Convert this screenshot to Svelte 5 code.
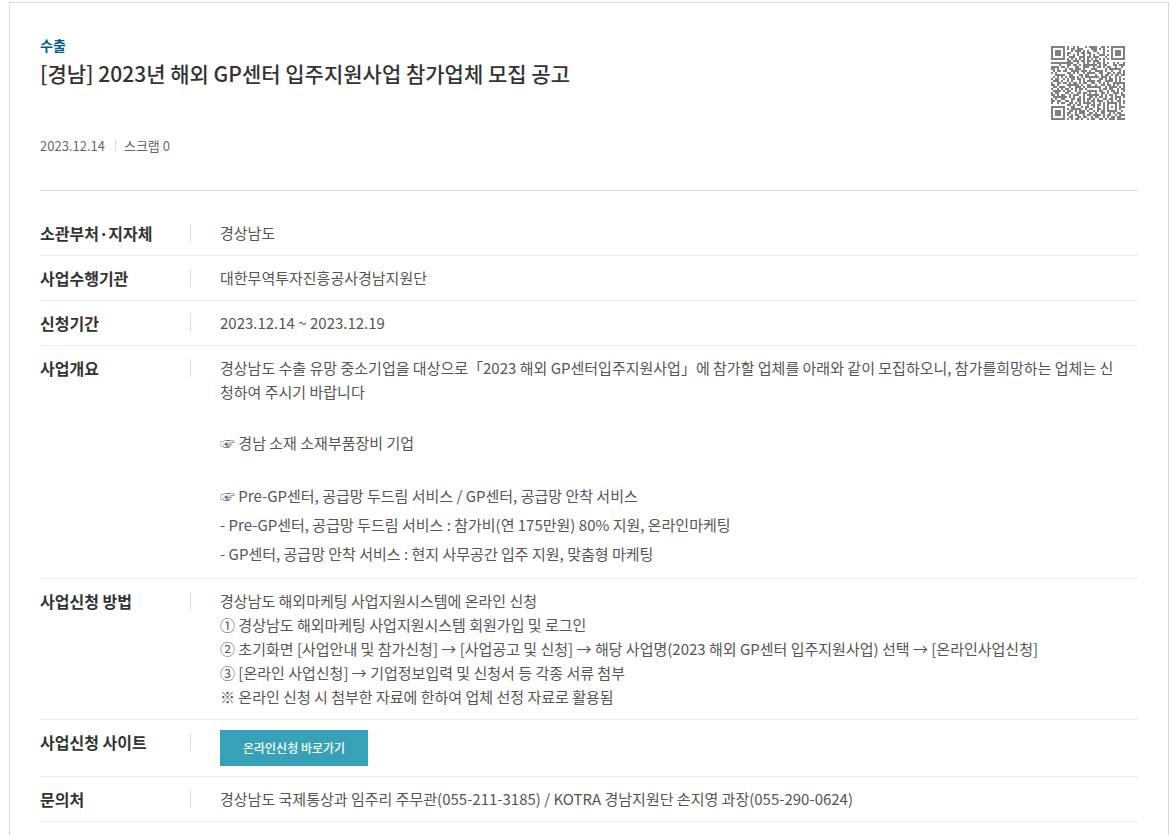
<script lang="ts">
	type Row = { label: string; lines?: string[]; notes?: string[][]; link?: string };

	const rows: Row[] = [
		{ label: '소관부처·지자체', lines: ['경상남도'] },
		{ label: '사업수행기관', lines: ['대한무역투자진흥공사경남지원단'] },
		{ label: '신청기간', lines: ['2023.12.14 ~ 2023.12.19'] },
		{
			label: '사업개요',
			lines: [
				'경상남도 수출 유망 중소기업을 대상으로「2023 해외 GP센터입주지원사업」에 참가할 업체를 아래와 같이 모집하오니, 참가를희망하는 업체는 신',
				'청하여 주시기 바랍니다'
			],
			notes: [
				['☞ 경남 소재 소재부품장비 기업'],
				[
					'☞ Pre-GP센터, 공급망 두드림 서비스 / GP센터, 공급망 안착 서비스',
					'- Pre-GP센터, 공급망 두드림 서비스 : 참가비(연 175만원) 80% 지원, 온라인마케팅',
					'- GP센터, 공급망 안착 서비스 : 현지 사무공간 입주 지원, 맞춤형 마케팅'
				]
			]
		},
		{
			label: '사업신청 방법',
			lines: [
				'경상남도 해외마케팅 사업지원시스템에 온라인 신청',
				'① 경상남도 해외마케팅 사업지원시스템 회원가입 및 로그인',
				'② 초기화면 [사업안내 및 참가신청] → [사업공고 및 신청] → 해당 사업명(2023 해외 GP센터 입주지원사업) 선택 → [온라인사업신청]',
				'③ [온라인 사업신청] → 기업정보입력 및 신청서 등 각종 서류 첨부',
				'※ 온라인 신청 시 첨부한 자료에 한하여 업체 선정 자료로 활용됨'
			]
		},
		{ label: '사업신청 사이트', link: '온라인신청 바로가기' },
		{
			label: '문의처',
			lines: ['경상남도 국제통상과 임주리 주무관(055-211-3185) / KOTRA 경남지원단 손지영 과장(055-290-0624)']
		}
	];

	// data modules of the code, the corner finders are drawn on their own
	const modules = [
		'........#..#.#...#.####..##.#........',
		'........#.##.###....###.#.#..........',
		'..........#.###.#.#..##...#.#........',
		'........##...#.##.##...#..#..........',
		'........#..#.#..#..#.#..###.#........',
		'.........###..###.##.###...#.........',
		'........#.#.#.#.#.#.#.#.#.#.#........',
		'........##.###.##.##.###..#..........',
		'###########..#..#.#..#.##.#.#..#.#..#',
		'....#...##.##.#.#######.#.##...##.###',
		'####.##.#...##..###..#.##.#.##..#..#.',
		'##.#...#.##.###.#...###....#.######..',
		'.#.##.##..####.###.#..####.#..#...#.#',
		'#.#.....##.#.#..#.####..##..##.#.##.#',
		'..#####..##...##.##...#..#.##.#.##.##',
		'.#.#.#.#.###.#.#.#######.###.#..#.#..',
		'#.##..#.#.##.##.#..#....##.#.##.#.#.#',
		'.###.#..#.#...#.#.####.##..####.#.#..',
		'#..##.##.#.##.#.##..##..#.#.#..######',
		'##.#....######.#..##..#..##.##.#.#..#',
		'.##.###..#..###.#.#######..#.####.#.#',
		'#..#.#.##.#.#.##.#......#.##.##..#.##',
		'.####.#.##..#.#...#####.##..#.##.#..#',
		'#.##...##.#..##.##.#..#..##.#..###.#.',
		'##.#.##..#.###..#.######.#.#.##.#..##',
		'.#######.#.#..#.#..##.#.##.#..#.###.#',
		'#.#..##...##.##.#.##.#.#..##.##.#.#..',
		'##.##..##.#..##.#.#.##.###..#.#..##.#',
		'#..#.##..##.#.#.####.#..#.#.#####.#.#',
		'........##.#.##...#.##.##.#.#...#.#..',
		'..........##...#.##..#.#..#.#.#.#.###',
		'........#.#####..#.##..##.#.#...#.#..',
		'.........##.#.###.#..#.#.##.#####..#.',
		'........##..#.###..##.#..##..#.#.##..',
		'........#.#.##..#.##.####.#.##..#.###',
		'.........##..##.##..#.##..#.#.##.##..',
		'........#.#.##.#..#.##..##.#.###.####'
	];
	const finders = [
		[0, 0],
		[30, 0],
		[0, 30]
	];

	const codePath = modules
		.flatMap((line, y) => [...line].map((m, x) => (m === '#' ? `M${x} ${y}h1v1h-1z` : '')))
		.join('');
</script>

<article class="notice">
	<header class="notice-head">
		<div class="heading">
			<span class="category">수출</span>
			<h1>[경남] 2023년 해외 GP센터 입주지원사업 참가업체 모집 공고</h1>
			<p class="meta"><span>2023.12.14</span><span class="scrap">스크랩 0</span></p>
		</div>
		<svg class="qr" viewBox="0 0 37 37" shape-rendering="crispEdges" role="img" aria-label="QR">
			<path d={codePath} />
			{#each finders as [x, y]}
				<path
					fill-rule="evenodd"
					d="M{x} {y}h7v7h-7zM{x + 1} {y + 1}v5h5v-5zM{x + 2} {y + 2}h3v3h-3z"
				/>
			{/each}
		</svg>
	</header>

	<dl class="details">
		{#each rows as row}
			<div class="row">
				<dt>{row.label}</dt>
				<dd>
					{#each row.lines ?? [] as line}
						<p>{line}</p>
					{/each}
					{#each row.notes ?? [] as note}
						<div class="note">
							{#each note as line}
								<p>{line}</p>
							{/each}
						</div>
					{/each}
					{#if row.link}
						<a class="apply" href="#apply">{row.link}</a>
					{/if}
				</dd>
			</div>
		{/each}
	</dl>
</article>

<style>
	:global(body) {
		margin: 0;
		background: #fff;
	}
	.notice {
		box-sizing: border-box;
		min-height: calc(100vh - 2px);
		margin: 2px 2px 0 9px;
		padding: 0 30px;
		border: 1px solid #ddd;
		border-bottom: 0;
		color: #555;
		font-family: 'Noto Sans CJK KR', 'Noto Sans', sans-serif;
		font-size: 15px;
		line-height: 24px;
	}
	h1,
	p,
	dl,
	dd {
		margin: 0;
	}
	.notice-head {
		display: flex;
		justify-content: space-between;
		align-items: flex-start;
		gap: 24px;
		padding: 32px 0;
		border-bottom: 1px solid #ddd;
	}
	.category {
		display: block;
		color: #005a8f;
		font-size: 14px;
		font-weight: 700;
		line-height: 20px;
	}
	h1 {
		color: #333;
		font-size: 21px;
		font-weight: 500;
		line-height: 36px;
	}
	.meta {
		display: flex;
		align-items: center;
		margin-top: 43px;
		color: #666;
		font-size: 13px;
	}
	.scrap {
		display: flex;
		align-items: center;
	}
	.scrap::before {
		content: '';
		width: 1px;
		height: 12px;
		margin: 0 8px 0 10px;
		background: #ddd;
	}
	.qr {
		flex: none;
		width: 74px;
		height: 74px;
		margin: 11px 13px 0 0;
		fill: #808080;
	}
	.details {
		padding-top: 20px;
	}
	.row {
		display: flex;
		align-items: flex-start;
		padding: 10px 0;
		border-bottom: 1px solid #eee;
	}
	dt {
		display: flex;
		flex: none;
		justify-content: space-between;
		align-items: center;
		width: 151px;
		color: #333;
		font-size: 16px;
		font-weight: 700;
	}
	dt::after {
		content: '';
		width: 1px;
		height: 18px;
		background: #ddd;
	}
	dd {
		flex: 1;
		min-width: 0;
		padding-left: 29px;
	}
	.note {
		margin-top: 24px;
		line-height: 29px;
	}
	.apply {
		display: inline-block;
		padding: 0 23px;
		background: #37a1b7;
		color: #fff;
		font-size: 12px;
		font-weight: 500;
		line-height: 36px;
		text-decoration: none;
		vertical-align: top;
	}
</style>
